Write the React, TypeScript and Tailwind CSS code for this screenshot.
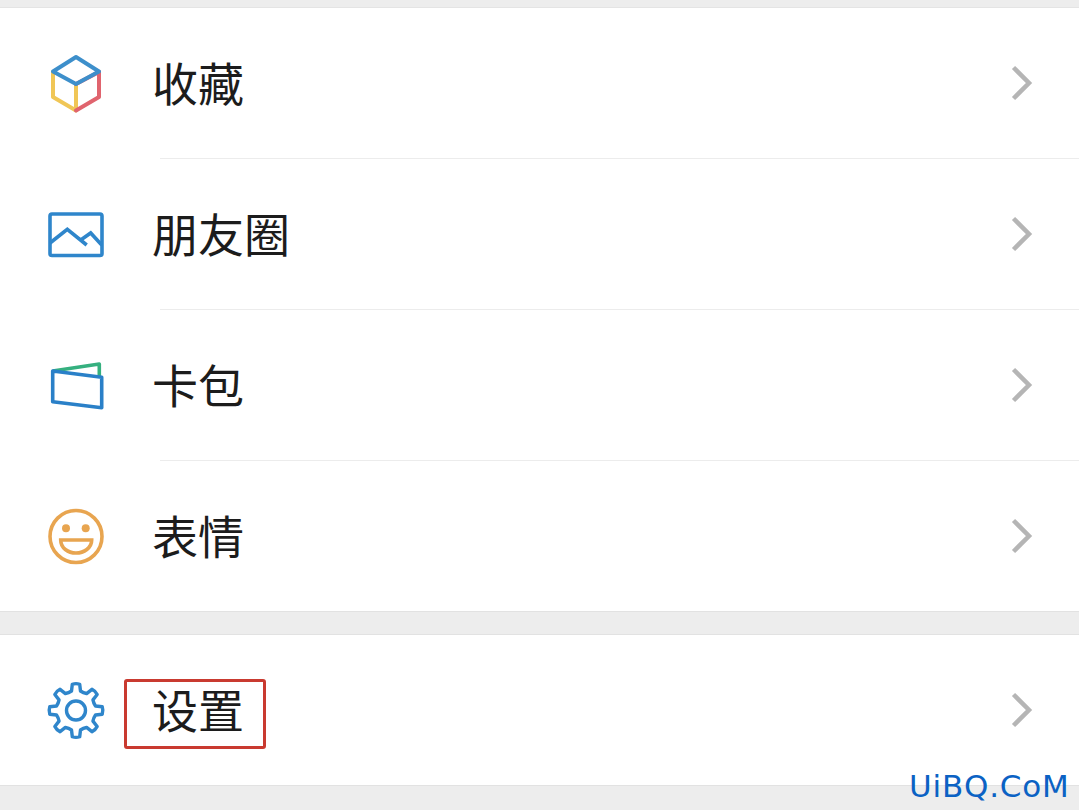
import React from 'react'

const Chevron = () => (
  <svg className="w-[30px] h-[40px] shrink-0" viewBox="0 0 30 40" fill="none">
    <path d="M6.5 4.5L22 20L6.5 35.5" stroke="#b5b5b5" strokeWidth="4.5" />
  </svg>
)

const CubeIcon = () => (
  <svg className="w-[60px] h-[60px]" viewBox="0 0 60 60" fill="none" strokeWidth="4" strokeLinejoin="round" strokeLinecap="round">
    <path d="M7 19V44L30 57.5V31" stroke="#f0c656" />
    <path d="M53 19V44L30 57.5" stroke="#e0646e" />
    <path d="M30 31L53 19" stroke="#e0646e" />
    <path d="M30 4L53 18.5L30 31L7 18.5Z" stroke="#3d8fcb" />
  </svg>
)

const PhotoIcon = () => (
  <svg className="w-[60px] h-[60px]" viewBox="0 0 60 60" fill="none" stroke="#2f86cb" strokeWidth="3.6">
    <rect x="4" y="10" width="52" height="41.5" rx="2" />
    <path d="M4 39L21.3 25.3L40.7 41M34.7 36L44.7 29L55.7 41" />
  </svg>
)

const WalletIcon = () => (
  <svg className="w-[60px] h-[60px]" viewBox="0 0 60 60" fill="none" strokeWidth="3.6" strokeLinejoin="round">
    <path d="M6.7 16L53.3 9V21.7" stroke="#35b07f" />
    <path d="M6.7 16L55.7 22.3V52.7L6.7 46.7Z" stroke="#2a80c8" />
  </svg>
)

const SmileIcon = () => (
  <svg className="w-[60px] h-[60px]" viewBox="0 0 60 60" fill="none" stroke="#e8a550" strokeWidth="3.6">
    <circle cx="30" cy="30.5" r="26" />
    <circle cx="20" cy="22.3" r="4" fill="#e8a550" stroke="none" />
    <circle cx="39.7" cy="22.3" r="4" fill="#e8a550" stroke="none" />
    <path d="M14.7 34H45.7C45.7 42 38 47 30 47C22 47 14.7 42 14.7 34Z" />
  </svg>
)

// eight teeth, one pointing straight up
const gearPath = () => {
  const cx = 30
  const cy = 30.5
  const pt = (r: number, deg: number) => {
    const a = ((deg - 90) * Math.PI) / 180
    return `${(cx + r * Math.cos(a)).toFixed(2)} ${(cy + r * Math.sin(a)).toFixed(2)}`
  }
  let d = ''
  for (let i = 0; i < 8; i++) {
    const c = i * 45
    d += `${i === 0 ? 'M' : 'L'}${pt(20, c - 13)}L${pt(26.5, c - 8)}Q${pt(27.5, c)} ${pt(26.5, c + 8)}L${pt(20, c + 13)}Q${pt(19, c + 22.5)} `
    d += pt(20, c + 32)
  }
  return d + 'Z'
}

const GearIcon = () => (
  <svg className="w-[60px] h-[60px]" viewBox="0 0 60 60" fill="none" stroke="#2f86cb" strokeWidth="3.4" strokeLinejoin="round">
    <path d={gearPath()} />
    <circle cx="30" cy="30.5" r="9.5" />
  </svg>
)

const Row: React.FC<{ icon: React.ReactNode; label: string }> = ({ icon, label }) => (
  <div className="flex items-center h-[150px] pl-[46px] pr-[42px]">
    {icon}
    <span className="ml-[46px] -translate-y-0.5 text-[46px] leading-none text-[#1c1c1c]">{label}</span>
    <div className="ml-auto flex">
      <Chevron />
    </div>
  </div>
)

const Divider = () => <div className="ml-[160px] h-px bg-[#ececec]" />

export default function App() {
  return (
    <div
      className="relative h-[810px] w-[1079px] overflow-hidden bg-[#ededed]"
      style={{ fontFamily: '"Noto Sans CJK SC", "Liberation Sans", sans-serif' }}
    >
      <div className="h-2 border-b border-[#e4e4e4]" />
      <div className="bg-white border-b border-[#e2e2e2]">
        <Row icon={<CubeIcon />} label="收藏" />
        <Divider />
        <Row icon={<PhotoIcon />} label="朋友圈" />
        <Divider />
        <Row icon={<WalletIcon />} label="卡包" />
        <Divider />
        <Row icon={<SmileIcon />} label="表情" />
      </div>
      <div className="h-[22px]" />
      <div className="bg-white border-y border-[#e2e2e2]">
        <Row icon={<GearIcon />} label="设置" />
      </div>

      {/* red highlight + watermark sit over the list */}
      <div className="absolute left-[124px] top-[679px] h-[70px] w-[142px] rounded-[3px] border-[3px] border-[#c93a30]" />
      <div
        className="absolute left-[909px] top-[766px] text-[31px] leading-[40px] tracking-[0.8px] text-[#0b62c4]"
        style={{ fontFamily: '"DejaVu Sans", sans-serif' }}
      >
        UiBQ.CoM
      </div>
    </div>
  )
}
